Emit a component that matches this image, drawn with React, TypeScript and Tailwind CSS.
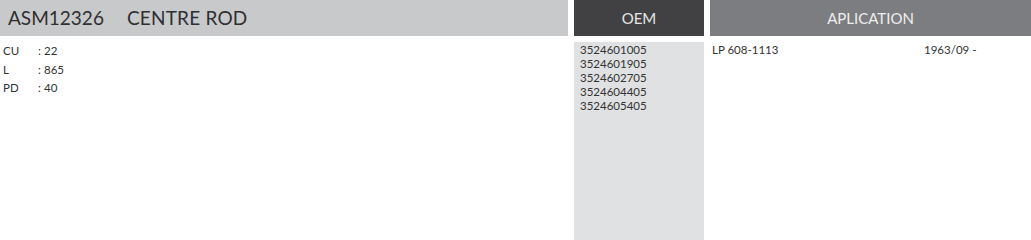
export default function App() {
  const oem = ["3524601005", "3524601905", "3524602705", "3524604405", "3524605405"];
  const specs: [string, string][] = [
    ["CU", "22"],
    ["L", "865"],
    ["PD", "40"],
  ];
  return (
    <div
      className="flex h-[240px] w-[1031px] bg-white text-[#333333]"
      style={{ fontFamily: "Lato, 'DejaVu Sans', sans-serif" }}
    >
      <div className="flex flex-1 flex-col">
        <div className="flex h-[36px] items-center bg-[#c8c9cb] pl-[8px] text-[19px] text-[#2f2f31]">
          <span>ASM12326</span>
          <span className="ml-[23px] tracking-[0.2px]">CENTRE ROD</span>
        </div>
        <div className="flex flex-col pl-[3px] pt-[6px] text-[11.5px] leading-[18.5px]">
          {specs.map(([k, v]) => (
            <div key={k} className="flex">
              <span className="w-[35px]">{k}</span>
              <span className="w-[6px]">:</span>
              <span>{v}</span>
            </div>
          ))}
        </div>
      </div>
      <div className="ml-[6px] flex w-[130px] flex-col">
        <div className="flex h-[36px] items-center justify-center bg-[#414143] text-[15px] text-[#e6e6e6]">
          OEM
        </div>
        <div className="mt-[6px] flex-1 bg-[#e0e1e3] pl-[6px] pt-[1px] text-[11.5px] leading-[14px]">
          {oem.map((o) => (
            <div key={o}>{o}</div>
          ))}
        </div>
      </div>
      <div className="ml-[6px] flex w-[321px] flex-col">
        <div className="flex h-[36px] items-center justify-center bg-[#7c7d81] text-[15px] text-[#eeeeee]">
          APLICATION
        </div>
        <div className="mt-[6px] flex pl-[2px] pt-[1px] text-[11.5px] leading-[14px]">
          <span className="w-[212px]">LP 608-1113</span>
          <span>1963/09 -</span>
        </div>
      </div>
    </div>
  );
}
